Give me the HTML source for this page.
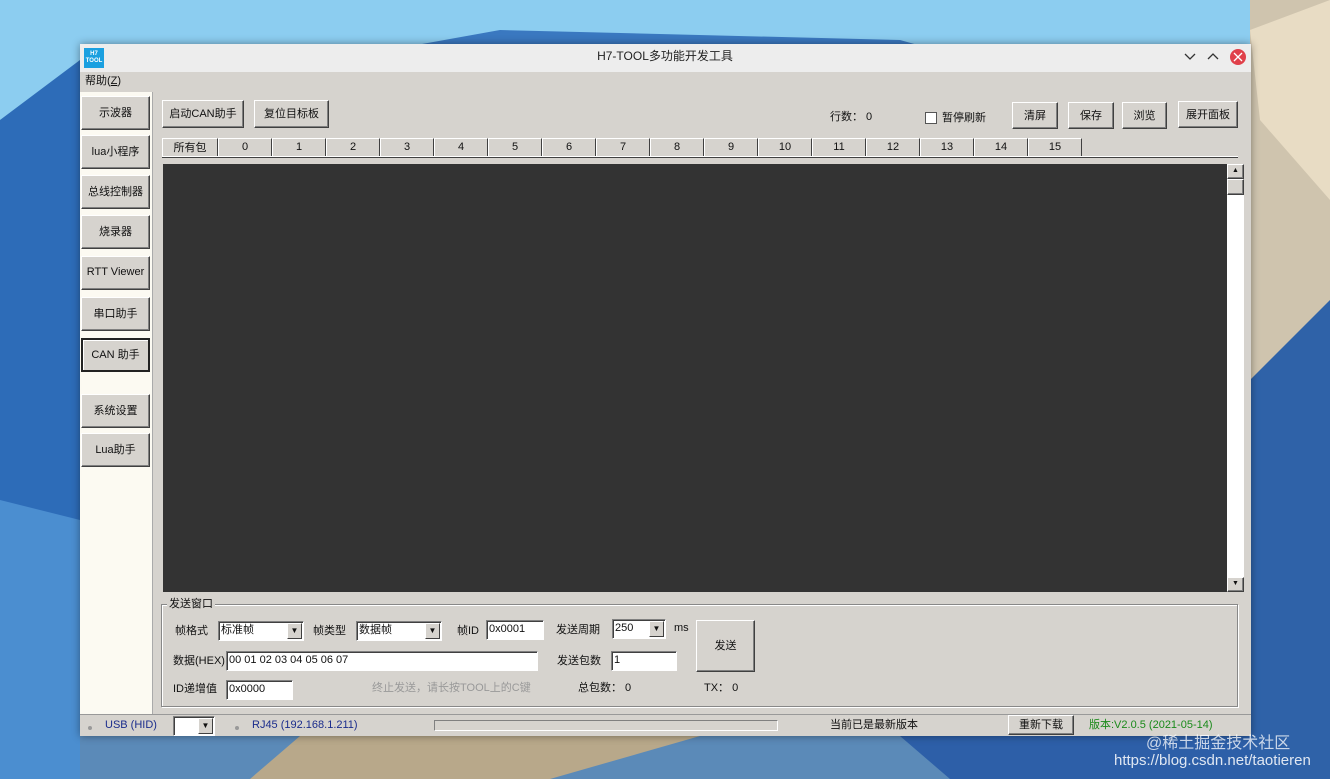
<!DOCTYPE html>
<html><head><meta charset="utf-8"><style>
*{box-sizing:border-box;margin:0;padding:0}
body{width:1330px;height:779px;overflow:hidden;position:relative;font-family:"Liberation Sans","Noto Sans CJK SC",sans-serif;font-size:11px;color:#111}
.a{position:absolute;line-height:13px}
.btn{position:absolute;background:#d6d3ce;border:1px solid;border-color:#fff #404040 #404040 #fff;box-shadow:inset -1px -1px 0 #808080;display:flex;align-items:center;justify-content:center;font-size:11px;padding-bottom:2px}
.sb{left:81px;width:69px;height:34px}
.tab{position:absolute;top:138px;height:19px;border:1px solid;border-color:#fff #404040 transparent #fff;display:flex;align-items:center;justify-content:center;background:#d6d3ce;padding-bottom:2px}
.inp{position:absolute;background:#fff;border:1px solid;border-color:#808080 #fff #fff #808080;box-shadow:inset 1px 1px 0 #404040;padding-left:2px;font-size:11px;line-height:16px;height:20px}
.dd{position:absolute;width:15px;height:16px;top:1px;right:1px;background:#d6d3ce;border:1px solid;border-color:#fff #404040 #404040 #fff;font-size:8px;text-align:center;line-height:14px}
</style></head><body>
<svg class="a" style="left:0;top:0" width="1330" height="779">
<rect width="1330" height="779" fill="#3a78c0"/>
<polygon points="0,0 1330,0 1330,160 900,40 500,30 0,120" fill="#8ccdf0"/>
<polygon points="1250,0 1330,0 1330,779 1250,779" fill="#cfc4ae"/>
<polygon points="1250,380 1330,300 1330,779 1250,779" fill="#2f62a8"/>
<polygon points="1250,30 1330,0 1330,200 1260,120" fill="#e8dcc4"/>
<polygon points="0,120 80,60 80,779 0,779" fill="#2d6cb8"/>
<polygon points="0,500 80,520 80,779 0,779" fill="#4b8ed0"/>
<polygon points="80,736 1250,736 1250,779 80,779" fill="#5b8ab8"/>
<polygon points="300,736 700,736 550,779 250,779" fill="#b8a88a"/>
<polygon points="900,736 1250,736 1250,779 950,779" fill="#2d5fa8"/>
</svg>
<div class="a" style="left:80px;top:44px;width:1171px;height:692px;background:#d6d3ce;box-shadow:0 0 8px rgba(0,0,0,.4)"></div>
<div class="a" style="left:80px;top:44px;width:1171px;height:28px;background:#ededed"></div>
<div class="a" style="left:84px;top:48px;width:20px;height:20px;background:#1ba0e0;color:#fff;font-size:6px;font-weight:bold;text-align:center;line-height:7px;padding-top:3px">H7<br>TOOL</div>
<div class="a" style="left:0;width:1330px;top:50px;text-align:center;font-size:12px;color:#222">H7-TOOL多功能开发工具</div>
<svg class="a" style="left:1182px;top:49px" width="70" height="16"><path d="M3 5l5 5 5-5M26 10l5-5 5 5" stroke="#333" stroke-width="1.3" fill="none"/><circle cx="56" cy="8" r="8" fill="#e0404a"/><path d="M52 4l8 8M60 4l-8 8" stroke="#fff" stroke-width="1.3"/></svg>
<div class="a" style="left:85px;top:75px;font-size:11px">帮助(<u>Z</u>)</div>
<div class="a" style="left:80px;top:92px;width:73px;height:622px;background:#fcfaf2;border-right:1px solid #aaa"></div>
<div class="btn sb" style="top:96px">示波器</div>
<div class="btn sb" style="top:135px">lua小程序</div>
<div class="btn sb" style="top:175px">总线控制器</div>
<div class="btn sb" style="top:215px">烧录器</div>
<div class="btn sb" style="top:256px">RTT Viewer</div>
<div class="btn sb" style="top:297px">串口助手</div>
<div class="btn sb" style="top:338px;border:2px solid #222;box-shadow:inset 1px 1px 0 #fff">CAN 助手</div>
<div class="btn sb" style="top:394px">系统设置</div>
<div class="btn sb" style="top:433px">Lua助手</div>
<div class="btn" style="left:162px;top:100px;width:82px;height:28px">启动CAN助手</div>
<div class="btn" style="left:254px;top:100px;width:75px;height:28px">复位目标板</div>
<div class="a" style="left:830px;top:111px">行数： 0</div>
<div class="a" style="left:925px;top:112px;width:12px;height:12px;background:#fff;border:1px solid #555"></div>
<div class="a" style="left:942px;top:112px">暂停刷新</div>
<div class="btn" style="left:1012px;top:102px;width:46px;height:27px">清屏</div>
<div class="btn" style="left:1068px;top:102px;width:46px;height:27px">保存</div>
<div class="btn" style="left:1122px;top:102px;width:45px;height:27px">浏览</div>
<div class="btn" style="left:1178px;top:101px;width:60px;height:27px">展开面板</div>
<div class="tab" style="left:162px;width:56px">所有包</div>
<div id="tabs"></div>
<script>
let h='';for(let i=0;i<16;i++){h+='<div class="tab" style="left:'+(218+i*54)+'px;width:54px">'+i+'</div>'}document.getElementById('tabs').innerHTML=h;
</script>
<div class="a" style="left:162px;top:156px;width:1076px;height:2px;border-top:1px solid #fff;border-bottom:1px solid #404040"></div>
<div class="a" style="left:163px;top:164px;width:1064px;height:428px;background:#333"></div>
<div class="a" style="left:1227px;top:164px;width:17px;height:428px;background:#fff"></div>
<div class="btn" style="left:1227px;top:164px;width:17px;height:15px;font-size:7px">▲</div>
<div class="btn" style="left:1227px;top:179px;width:17px;height:16px"></div>
<div class="btn" style="left:1227px;top:577px;width:17px;height:15px;font-size:7px">▼</div>
<div class="a" style="left:161px;top:604px;width:1077px;height:103px;border:1px solid #888;box-shadow:1px 1px 0 #fff,inset 1px 1px 0 #fff"></div>
<div class="a" style="left:167px;top:598px;background:#d6d3ce;padding:0 2px">发送窗口</div>
<div class="a" style="left:175px;top:625px">帧格式</div>
<div class="inp" style="left:218px;top:621px;width:86px">标准帧<div class="dd">▼</div></div>
<div class="a" style="left:313px;top:625px">帧类型</div>
<div class="inp" style="left:356px;top:621px;width:86px">数据帧<div class="dd">▼</div></div>
<div class="a" style="left:457px;top:625px">帧ID</div>
<div class="inp" style="left:486px;top:620px;width:58px">0x0001</div>
<div class="a" style="left:556px;top:624px">发送周期</div>
<div class="inp" style="left:612px;top:619px;width:54px">250<div class="dd">▼</div></div>
<div class="a" style="left:674px;top:622px">ms</div>
<div class="btn" style="left:696px;top:620px;width:59px;height:52px">发送</div>
<div class="a" style="left:173px;top:655px">数据(HEX)</div>
<div class="inp" style="left:226px;top:651px;width:312px">00 01 02 03 04 05 06 07</div>
<div class="a" style="left:557px;top:655px">发送包数</div>
<div class="inp" style="left:611px;top:651px;width:66px">1</div>
<div class="a" style="left:173px;top:683px">ID递增值</div>
<div class="inp" style="left:226px;top:680px;width:67px">0x0000</div>
<div class="a" style="left:372px;top:682px;color:#999">终止发送，请长按TOOL上的C键</div>
<div class="a" style="left:578px;top:682px">总包数： 0</div>
<div class="a" style="left:704px;top:682px">TX： 0</div>
<div class="a" style="left:80px;top:714px;width:1171px;height:1px;background:#999"></div>
<div class="a" style="left:88px;top:726px;width:4px;height:4px;border-radius:2px;background:#999"></div>
<div class="a" style="left:105px;top:719px;color:#1a2c8c">USB (HID)</div>
<div class="inp" style="left:173px;top:716px;width:42px">&nbsp;<div class="dd">▼</div></div>
<div class="a" style="left:235px;top:726px;width:4px;height:4px;border-radius:2px;background:#999"></div>
<div class="a" style="left:252px;top:719px;color:#1a2c8c">RJ45 (192.168.1.211)</div>
<div class="a" style="left:434px;top:720px;width:344px;height:11px;border:1px solid;border-color:#808080 #fff #fff #808080"></div>
<div class="a" style="left:830px;top:719px">当前已是最新版本</div>
<div class="btn" style="left:1008px;top:715px;width:66px;height:20px">重新下载</div>
<div class="a" style="left:1089px;top:719px;color:#1a8a1a">版本:V2.0.5 (2021-05-14)</div>
<div class="a" style="left:1146px;top:735px;font-size:16px;line-height:18px;color:rgba(255,255,255,.75)">@稀土掘金技术社区</div>
<div class="a" style="left:1114px;top:752px;font-size:15px;line-height:17px;color:rgba(255,255,255,.85)">https://blog.csdn.net/taotieren</div>
</body></html>
